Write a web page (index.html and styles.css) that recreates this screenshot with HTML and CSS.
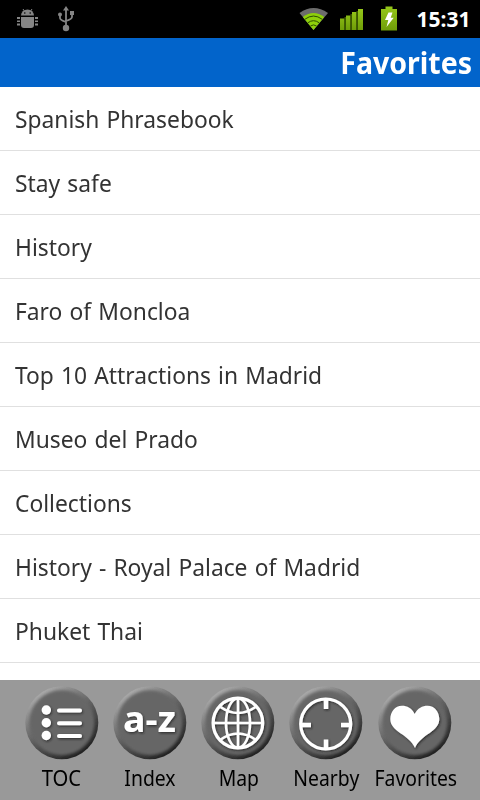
FILE: index.html
```html
<!DOCTYPE html>
<html lang="en">
<head>
<meta charset="utf-8">
<title>Favorites</title>
<link rel="stylesheet" href="styles.css">
</head>
<body>
<div class="screen">
  <div class="status">
    <svg class="status-left" width="90" height="38" viewBox="0 0 90 38">
      <g fill="#858585">
        <path d="M21 15.500a6.500 6 0 0 1 13 0z"/>
        <path d="M23 9l2 3M32 9l-2 3" stroke="#858585" stroke-width="1"/>
        <path d="M21 17h13v8q0 3-3 3h-7q-3 0-3-3z"/>
        <path d="M17 17h3v2h-3zM17 20.500h3v1.500h-3zM17 23.500h3v2h-3zM35 17h3v2h-3zM35 20.500h3v1.500h-3zM35 23.500h3v2h-3z"/>
        <circle cx="24.800" cy="13" r=".8" fill="#000"/><circle cx="30.200" cy="13" r=".8" fill="#000"/>
        <path d="M66 6l3 4.500h-6z"/><circle cx="66" cy="28" r="3.200"/><circle cx="60" cy="14.500" r="2"/><path d="M70 11h4v4h-4z"/>
      </g>
      <path d="M66 9v18M60 15v3q0 2 6 4M72 14v3q0 2-6 4" fill="none" stroke="#858585" stroke-width="1.800"/>
    </svg>
    <svg class="status-right" width="110" height="38" viewBox="295 0 110 38">
      <defs>
        <linearGradient id="green" x1="0" y1="0" x2="0" y2="1"><stop offset="0" stop-color="#96c81a"/><stop offset="1" stop-color="#6f9d08"/></linearGradient>
      </defs>
      <path d="M299.500 13Q313.500 3 328 13L313.500 30z" fill="#6c6c6c"/>
      <path d="M302.800 17Q313.500 9 324.200 17L313.500 30z" fill="#8ed00a"/>
      <path d="M304.800 19.300q8.700-6.500 17.400 0M307.800 22.800q5.700-4.200 11.400 0M310.500 26q3-2.200 6 0" fill="none" stroke="#2d4d00" stroke-width="1"/>
      <path d="M340 18.500h4.500V30H340zM346 15.500h4.500V30H346zM352 12h4.500v18H352zM358 9h5v21h-5z" fill="url(#green)"/>
      <path d="M345.200 17v13M351.200 14v16M357.200 11v19" stroke="#456800" stroke-width="1.300"/>
      <path d="M381 9h4.500V6.500h7V9h4.500v21.500h-16z" fill="url(#green)"/>
      <path d="M388.500 12.500h4l-1.800 5.300h3l-7.200 9.200 1.800-7h-3.300z" fill="#fff"/>
    </svg>
    <span class="clock">15:31</span>
  </div>
  <header class="title"><h1>Favorites</h1></header>
  <ul class="list">
    <li><span>Spanish Phrasebook</span></li>
    <li><span>Stay safe</span></li>
    <li><span>History</span></li>
    <li><span>Faro of Moncloa</span></li>
    <li><span>Top 10 Attractions in Madrid</span></li>
    <li><span>Museo del Prado</span></li>
    <li><span>Collections</span></li>
    <li><span>History - Royal Palace of Madrid</span></li>
    <li><span>Phuket Thai</span></li>
  </ul>
  <nav class="tabs">
    <a class="tab">
      <svg class="icon" width="74" height="76" viewBox="0 0 74 76">
        <defs>
          <linearGradient id="bevel" x1=".2" y1=".05" x2=".8" y2=".95"><stop offset="0" stop-color="#b0b0b0"/><stop offset=".3" stop-color="#7c7c7c"/><stop offset=".6" stop-color="#505050"/><stop offset="1" stop-color="#1c1c1c"/></linearGradient>
          <filter id="soft" x="-10%" y="-10%" width="120%" height="120%"><feGaussianBlur stdDeviation="1.500"/></filter>
          <filter id="edge" x="-10%" y="-10%" width="120%" height="120%"><feGaussianBlur stdDeviation=".5"/></filter>
          <filter id="shade" x="-20%" y="-20%" width="150%" height="150%"><feDropShadow dx="1" dy="1.200" stdDeviation=".8" flood-color="#222" flood-opacity=".8"/></filter>
          <g id="disc"><circle cx="36.800" cy="37.700" r="36.500" fill="url(#bevel)" filter="url(#edge)"/><circle cx="36.800" cy="37.700" r="32.500" fill="#666" filter="url(#soft)"/></g>
        </defs>
        <use href="#disc"/>
        <g filter="url(#shade)" fill="#fff"><circle cx="21.300" cy="25" r="4.700"/><circle cx="21.300" cy="37.800" r="4.700"/><circle cx="21.300" cy="50.500" r="4.700"/><path d="M34 25.500h21M34 38.300h21M34 51h21" stroke="#fff" stroke-width="4" stroke-linecap="round"/></g>
      </svg>
      <span class="label toc">TOC</span>
    </a>
    <a class="tab">
      <svg class="icon" width="74" height="76" viewBox="0 0 74 76"><use href="#disc"/><text class="az" x="36.500" y="47" text-anchor="middle" textLength="53" lengthAdjust="spacingAndGlyphs" filter="url(#shade)">a-z</text></svg>
      <span class="label index">Index</span>
    </a>
    <a class="tab">
      <svg class="icon" width="74" height="76" viewBox="0 0 74 76"><use href="#disc"/>
        <g filter="url(#shade)" fill="none" stroke="#fff" stroke-width="2.600"><circle cx="36.900" cy="38" r="24.800" stroke-width="3.200"/><path d="M37 13v50M12 38h50M19.500 22Q37 34 54.500 22M19 55Q37 42 55 55"/><ellipse cx="37" cy="38" rx="12" ry="24.800"/></g></svg>
      <span class="label map">Map</span>
    </a>
    <a class="tab">
      <svg class="icon" width="74" height="76" viewBox="0 0 74 76"><use href="#disc"/>
        <g filter="url(#shade)" fill="none" stroke="#fff"><circle cx="36.700" cy="39" r="25" stroke-width="3.200"/><path d="M37 15v9M37 54.500v9M13 40h9M52 40h9" stroke-width="4.500"/></g></svg>
      <span class="label nearby">Nearby</span>
    </a>
    <a class="tab">
      <svg class="icon" width="74" height="76" viewBox="0 0 74 76"><use href="#disc"/>
        <path d="M36.700 29C34 23 29 20.700 24 20.700C17 20.700 12.300 27 12.300 34C12.300 47 31 49 37 63C43 49 61.300 47 61.300 34C61.300 27 56.500 20.700 49.500 20.700C44.500 20.700 39.500 23 36.700 29z" fill="#fff" filter="url(#shade)"/></svg>
      <span class="label fav">Favorites</span>
    </a>
  </nav>
</div>
</body>
</html>
```
FILE: styles.css
```css
body {
  margin: 0;
  font-family: "Noto Sans", "Open Sans", sans-serif;
  background: #fff;
}

.screen {
  width: 480px;
  height: 800px;
  display: flex;
  flex-direction: column;
  overflow: hidden;
}

.status {
  height: 38px;
  flex: none;
  display: flex;
  background: #000;
  color: #fff;
}

.status svg {
  display: block;
  flex: none;
}

.status-right {
  margin-left: 205px;
}

.clock {
  margin-left: auto;
  padding-right: 9.5px;
  font-size: 21px;
  font-weight: 700;
  line-height: 39px;
}

.title {
  height: 49px;
  flex: none;
  background: #0264cb;
  color: #fff;
  text-align: right;
}

.title h1 {
  margin: 0;
  padding-right: 8px;
  font-size: 30px;
  line-height: 50px;
  transform: scaleX(.95);
  transform-origin: 472px 0;
}

.list {
  flex: 1;
  margin: 0;
  padding: 0;
  list-style: none;
}

.list li {
  height: 63px;
  padding-left: 15px;
  border-bottom: 1px solid #e0e0e0;
  color: #333;
  font-size: 24px;
  line-height: 64px;
  white-space: nowrap;
}

.list span {
  display: inline-block;
  word-spacing: 1.3px;
  transform: scaleX(.95);
  transform-origin: 0 0;
}

.tabs {
  height: 120px;
  flex: none;
  box-sizing: border-box;
  display: grid;
  grid-template-columns: 88px 88px 88px 88px 91px;
  padding: 5px 0 0 17.5px;
  background: #999;
}

.tab {
  display: flex;
  flex-direction: column;
  align-items: center;
  color: #000;
}

.icon {
  display: block;
}

.label {
  font-size: 22px;
  line-height: 33px;
  transform: scaleX(.88);
}

.toc {
  transform: scaleX(.92);
}

.index,
.map,
.nearby,
.fav {
  padding-left: 2px;
}

.az {
  font: 700 35px "Noto Sans", sans-serif;
  fill: #fff;
}
```
